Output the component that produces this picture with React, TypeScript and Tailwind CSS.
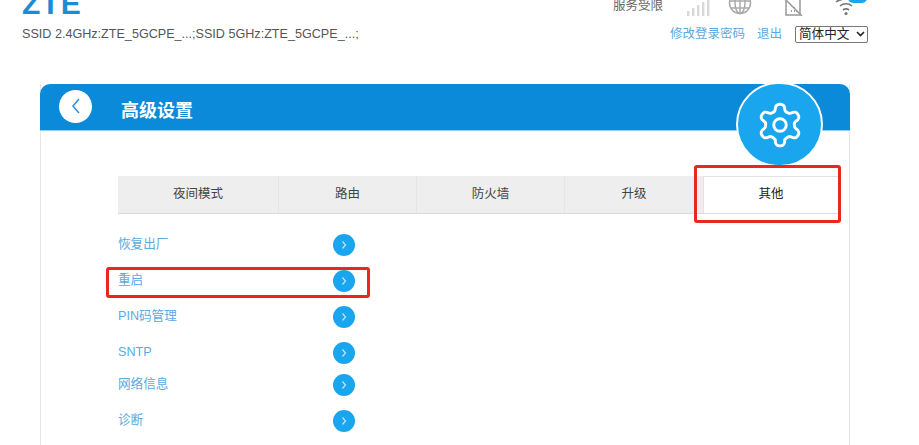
const FONT = "font-['Liberation_Sans','Noto_Sans_CJK_SC',sans-serif]";

function SignalIcon() {
  return (
    <svg width="24" height="16" viewBox="0 0 24 16" fill="#d8d8d8">
      <rect x="1" y="11" width="2.4" height="5" />
      <rect x="6" y="8" width="2.4" height="8" />
      <rect x="11" y="5" width="2.4" height="11" />
      <rect x="16" y="2" width="2.4" height="14" />
      <rect x="21" y="0" width="2.4" height="16" />
    </svg>
  );
}

function GlobeIcon() {
  return (
    <svg width="24" height="16" viewBox="0 0 24 16" fill="none" stroke="#aaa" strokeWidth="1.5">
      <circle cx="12" cy="3" r="10.5" />
      <ellipse cx="12" cy="3" rx="5" ry="10.5" />
      <path d="M1.5 1h21M3 8h18M12-8v22" />
    </svg>
  );
}

function SimIcon() {
  return (
    <svg width="18" height="16" viewBox="0 0 18 16" fill="none" stroke="#999" strokeWidth="1.5">
      <path d="M1 -4V15H15V-4" />
      <path d="M1 0L17 16" />
      <path d="M6 11h1M9 8h1M9 11h1M11 11h1" strokeWidth="2" />
    </svg>
  );
}

function WifiIcon() {
  return (
    <svg width="22" height="16" viewBox="0 0 22 16" fill="none" stroke="#777" strokeWidth="1.6">
      <path d="M1 2C6 -2 16 -2 21 2" />
      <path d="M5 6C8 3 14 3 17 6" />
      <path d="M8 10C10 8.5 12 8.5 14 10" />
      <circle cx="11" cy="13.5" r="1.6" fill="#777" stroke="none" />
    </svg>
  );
}

function GearIcon() {
  return (
    <svg width="50" height="50" viewBox="0 0 24 24" fill="none" stroke="#fff" strokeWidth="1.4" strokeLinecap="round" strokeLinejoin="round">
      <path d="M12.22 2h-.44a2 2 0 0 0-2 2v.18a2 2 0 0 1-1 1.73l-.43.25a2 2 0 0 1-2 0l-.15-.08a2 2 0 0 0-2.73.73l-.22.38a2 2 0 0 0 .73 2.73l.15.1a2 2 0 0 1 1 1.72v.51a2 2 0 0 1-1 1.74l-.15.09a2 2 0 0 0-.73 2.73l.22.38a2 2 0 0 0 2.73.73l.15-.08a2 2 0 0 1 2 0l.43.25a2 2 0 0 1 1 1.73V20a2 2 0 0 0 2 2h.44a2 2 0 0 0 2-2v-.18a2 2 0 0 1 1-1.73l.43-.25a2 2 0 0 1 2 0l.15.08a2 2 0 0 0 2.73-.73l.22-.39a2 2 0 0 0-.73-2.73l-.15-.08a2 2 0 0 1-1-1.74v-.5a2 2 0 0 1 1-1.74l.15-.09a2 2 0 0 0 .73-2.73l-.22-.38a2 2 0 0 0-2.73-.73l-.15.08a2 2 0 0 1-2 0l-.43-.25a2 2 0 0 1-1-1.73V4a2 2 0 0 0-2-2z" />
      <circle cx="12" cy="12" r="3" />
    </svg>
  );
}

function Row({ label, className }: { label: string; className: string }) {
  return (
    <div className={`flex items-center w-[236.5px] h-[22px] ${className}`}>
      <span className="flex-1 text-[12.6px] text-[#5aaae2] leading-none mb-[1px]">{label}</span>
      <span className="w-[22px] h-[22px] rounded-full bg-[#1aa6ee] flex items-center justify-center">
        <svg width="8" height="10" viewBox="0 0 8 10" fill="none" stroke="#bfe6fb" strokeWidth="1.2">
          <path d="M2.5 1.5L5.5 5L2.5 8.5" />
        </svg>
      </span>
    </div>
  );
}

export default function App() {
  const rows = [
    { label: "恢复出厂", className: "mt-[20px]" },
    { label: "重启", className: "mt-[14px]" },
    { label: "PIN码管理", className: "mt-[14px]" },
    { label: "SNTP", className: "mt-[14px]" },
    { label: "网络信息", className: "mt-[10px]" },
    { label: "诊断", className: "mt-[14px]" },
  ];
  return (
    <div className={`relative w-[919px] h-[445px] overflow-hidden bg-white ${FONT}`}>
      <header className="h-[84px] pl-[22px] pr-[51px]">
        <div className="flex items-end justify-between h-[16px]">
          <span className="text-[30px] leading-none font-bold text-[#1b8dd6] tracking-[1px] mb-[2px] font-['Liberation_Sans',sans-serif] h-[14px] flex items-end">
            <span className="mb-[-5px]">ZTE</span>
          </span>
          <div className="flex items-end h-[16px]">
            <span className="text-[12.5px] leading-none text-[#666] mr-[23px] mb-[4px]">服务受限</span>
            <span className="mr-[18px]"><SignalIcon /></span>
            <span className="mr-[33px]"><GlobeIcon /></span>
            <span className="mr-[32px]"><SimIcon /></span>
            <span className="relative mr-[11px]">
              <WifiIcon />
              <span className="absolute left-[13px] top-[-7px] w-[19px] h-[10px] rounded-full bg-[#1aa6ee]" />
            </span>
          </div>
        </div>
        <div className="flex items-center justify-between mt-[9px] h-[18px]">
          <span className="text-[12.6px] text-[#555]">SSID 2.4GHz:ZTE_5GCPE_...;SSID 5GHz:ZTE_5GCPE_...;</span>
          <div className="flex items-center">
            <span className="text-[12.5px] text-[#5aaae2]">修改登录密码</span>
            <span className="text-[12.5px] text-[#5aaae2] ml-[12px]">退出</span>
            <span className="ml-[13px] w-[73px] h-[17px] border border-[#777] rounded-[2px] flex items-center justify-between pl-[3px] pr-[2px] text-[12.6px] leading-none text-[#222]">
              简体中文
              <svg width="9" height="6" viewBox="0 0 9 6" fill="none" stroke="#222" strokeWidth="1.6"><path d="M1 1l3.5 3.5L8 1" /></svg>
            </span>
          </div>
        </div>
      </header>

      <main className="relative ml-[40px] w-[810px] h-[361px] border-x border-[#e6e6e6]">
        <div className="-mx-px h-[47px] bg-[#0a8ad8] rounded-t-[10px] border-b border-[#8fd0f5] flex items-center pl-[19px]">
          <span className="w-[33px] h-[33px] rounded-full bg-white flex items-center justify-center mb-[2px]">
            <svg width="14" height="18" viewBox="0 0 14 18" fill="none" stroke="#2d8fd2" strokeWidth="1.5"><path d="M10 2L4 9l6 7" /></svg>
          </span>
          <span className="ml-[29px] text-[18px] font-bold text-white leading-none mt-[8px]">高级设置</span>
        </div>
        <div className="absolute left-[695px] top-[-2px] w-[87px] h-[85px] rounded-full bg-[#1aa6ee] border-[2px] border-white flex items-center justify-center">
          <GearIcon />
        </div>

        <div className="flex ml-[77px] mt-[45px] w-[720px] h-[38px] text-[12.5px] text-[#444] border-b border-[#dcdcdc]">
          <div className="w-[161px] pb-[1px] bg-[#eee] border-r border-[#e6e6e6] flex items-center justify-center">夜间模式</div>
          <div className="w-[138px] pb-[1px] bg-[#eee] border-r border-[#e6e6e6] flex items-center justify-center">路由</div>
          <div className="w-[148px] pb-[1px] bg-[#eee] border-r border-[#e6e6e6] flex items-center justify-center">防火墙</div>
          <div className="w-[138px] pb-[1px] bg-[#eee] flex items-center justify-center">升级</div>
          <div className="w-[135px] pb-[1px] bg-white border-l border-t border-[#e3e3e3] flex items-center justify-center text-[#222]">其他</div>
        </div>

        <div className="ml-[77px]">
          {rows.map((r) => (
            <Row key={r.label} label={r.label} className={r.className} />
          ))}
        </div>
      </main>

      <div className="absolute left-[694px] top-[165px] w-[147px] h-[58px] border-[3px] border-[#e8281e] rounded-[3px]" />
      <div className="absolute left-[106px] top-[267px] w-[264px] h-[31px] border-[3px] border-[#e8281e] rounded-[3px]" />
    </div>
  );
}
